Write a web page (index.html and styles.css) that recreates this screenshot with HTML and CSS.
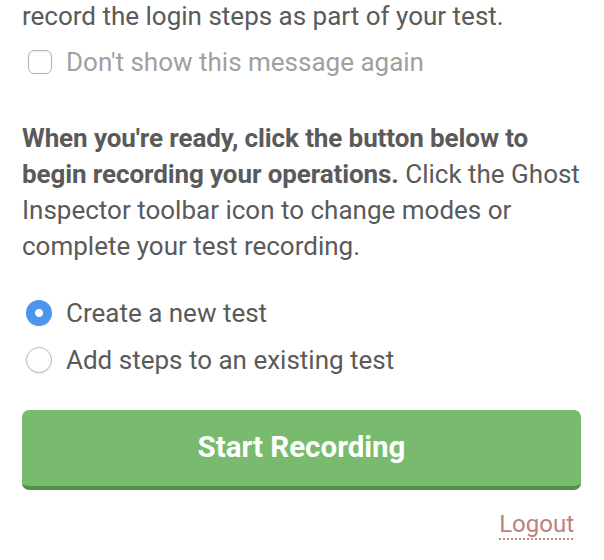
FILE: index.html
```html
<!DOCTYPE html>
<html>
<head>
<meta charset="utf-8">
<link rel="stylesheet" href="styles.css">
</head>
<body>
<div class="popup">
  <p class="intro">record the login steps as part of your test.</p>
  <label class="check">
    <span class="box"></span>
    <span class="check-label">Don't show this message again</span>
  </label>
  <p class="ready"><strong>When you're ready, click the button below to begin recording your operations.</strong> Click the Ghost Inspector toolbar icon to change modes or complete your test recording.</p>
  <div class="options">
    <label class="option">
      <span class="radio checked"></span>
      <span>Create a new test</span>
    </label>
    <label class="option">
      <span class="radio"></span>
      <span>Add steps to an existing test</span>
    </label>
  </div>
  <button class="start">Start Recording</button>
  <div class="footer"><a class="logout">Logout</a></div>
</div>
</body>
</html>
```
FILE: styles.css
```css
html, body {
  margin: 0;
  padding: 0;
  background: #ffffff;
}
body {
  font-family: Roboto, "Noto Sans", sans-serif;
  font-size: 26px;
  color: #5a5a5a;
  overflow: hidden;
  height: 560px;
}
.popup {
  display: flex;
  flex-direction: column;
  padding: 0 19px 0 22px;
  height: 560px;
  box-sizing: border-box;
}
p {
  margin: 0;
  line-height: 36px;
}
.intro {
  margin-top: -2px;
}
.check {
  display: flex;
  align-items: center;
  gap: 14px;
  height: 36px;
  margin-top: 10px;
  padding-left: 6px;
}
.box {
  width: 24px;
  height: 24px;
  border: 1.5px solid #b5b5b5;
  border-radius: 6px;
  background: #fff;
  box-sizing: border-box;
  box-shadow: inset 0 1px 2px rgba(0,0,0,0.08);
}
.check-label {
  color: #a0a0a0;
}
.ready {
  margin-top: 40px;
}
.ready strong {
  font-weight: 700;
  letter-spacing: -0.1px;
}
.options {
  display: flex;
  flex-direction: column;
  gap: 11px;
  margin-top: 31px;
}
.option {
  display: flex;
  align-items: center;
  gap: 14px;
  height: 36px;
  padding-left: 4px;
}
.radio {
  border: 1.5px solid #b8b8b8;
  border-radius: 50%;
  background: #fff;
  box-sizing: border-box;
  width: 26px;
  height: 26px;
  box-shadow: 0 1px 1px rgba(0,0,0,0.08);
}
.radio.checked {
  border: none;
  background: radial-gradient(circle, #ffffff 0 3.5px, #4d94ee 4.5px);
}
.start {
  margin-top: 32px;
  height: 80px;
  width: calc(100% - 4px);
  border: none;
  border-bottom: 4px solid #4f9145;
  border-radius: 7px;
  background: #78bb6e;
  color: #ffffff;
  font-family: Roboto, "Noto Sans", sans-serif;
  font-size: 29.5px;
  font-weight: 700;
  padding: 0 0 2px;
}
.footer {
  display: flex;
  justify-content: flex-end;
  margin-top: 16px;
  line-height: 36px;
  padding-right: 11px;
  font-size: 24px;
}
.logout {
  color: #c0807f;
  text-decoration: underline dotted;
  text-decoration-color: #c98585;
  text-underline-offset: 6px;
  text-decoration-thickness: 2px;
}
```
